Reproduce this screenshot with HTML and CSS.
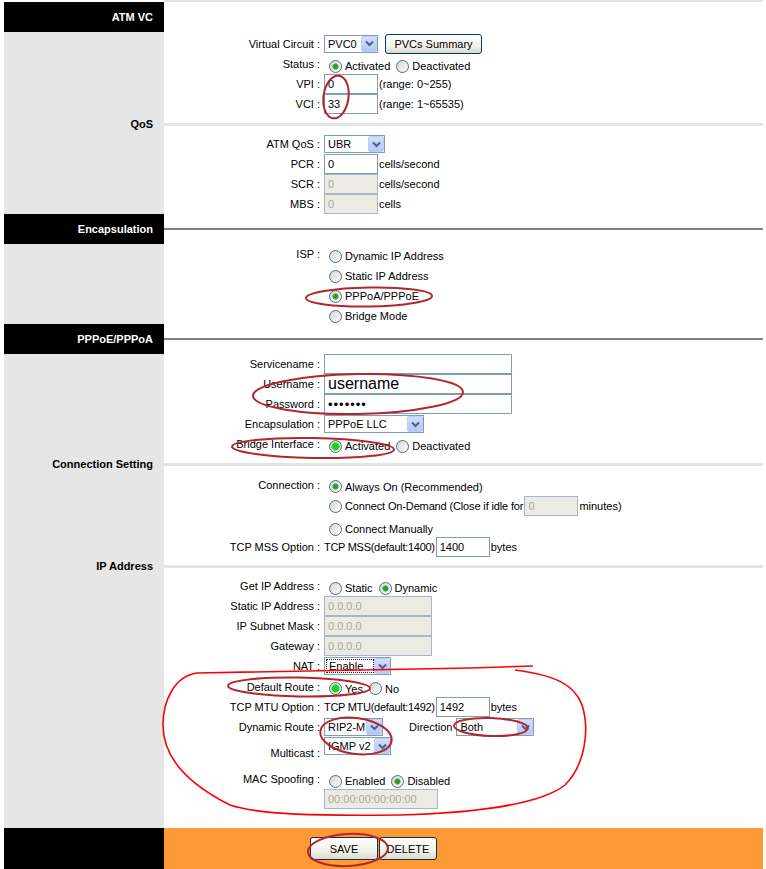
FILE: index.html
```html
<!DOCTYPE html>
<html lang="en">
<head>
    <meta charset="UTF-8">
    <title>WAN Setting</title>
    <link rel="stylesheet" href="styles.css">
</head>
<body>
<div class="page">
    <div class="config">
        <!-- ATM VC -->
        <div class="title dark first">ATM VC</div>
        <div class="rule top"></div>
        <div class="side"></div>
        <div class="fields">
            <div class="row h21 first-row">
                <span class="lbl">Virtual Circuit :</span>
                <div class="val">
                    <div class="select w54"><span class="cur">PVC0</span><span class="arrow"><svg viewBox="0 0 9 7"><polyline points="1,1.5 4.5,5 8,1.5"/></svg></span></div>
                    <button class="btn summary">PVCs Summary</button>
                </div>
            </div>
            <div class="row">
                <span class="lbl">Status :</span>
                <div class="val radios">
                    <label class="choice"><input type="radio" name="status" checked>Activated</label>
                    <label class="choice"><input type="radio" name="status">Deactivated</label>
                </div>
            </div>
            <div class="row">
                <span class="lbl">VPI :</span>
                <div class="val"><input class="txt w54" type="text" value="0"><span class="unit">(range: 0~255)</span></div>
            </div>
            <div class="row">
                <span class="lbl">VCI :</span>
                <div class="val"><input class="txt w54" type="text" value="33"><span class="unit">(range: 1~65535)</span></div>
            </div>
        </div>

        <!-- QoS -->
        <div class="title light">QoS</div>
        <div class="rule light"></div>
        <div class="side"></div>
        <div class="fields">
            <div class="row">
                <span class="lbl">ATM QoS :</span>
                <div class="val"><div class="select w61"><span class="cur">UBR</span><span class="arrow"><svg viewBox="0 0 9 7"><polyline points="1,1.5 4.5,5 8,1.5"/></svg></span></div></div>
            </div>
            <div class="row">
                <span class="lbl">PCR :</span>
                <div class="val"><input class="txt w54" type="text" value="0"><span class="unit">cells/second</span></div>
            </div>
            <div class="row">
                <span class="lbl">SCR :</span>
                <div class="val"><input class="txt w54" type="text" value="0" disabled><span class="unit">cells/second</span></div>
            </div>
            <div class="row">
                <span class="lbl">MBS :</span>
                <div class="val"><input class="txt w54" type="text" value="0" disabled><span class="unit">cells</span></div>
            </div>
        </div>

        <!-- Encapsulation -->
        <div class="title dark">Encapsulation</div>
        <div class="rule dark"></div>
        <div class="side"></div>
        <div class="fields">
            <div class="row">
                <span class="lbl">ISP :</span>
                <div class="val radios"><label class="choice"><input type="radio" name="isp">Dynamic IP Address</label></div>
            </div>
            <div class="row">
                <span class="lbl"></span>
                <div class="val radios"><label class="choice"><input type="radio" name="isp">Static IP Address</label></div>
            </div>
            <div class="row">
                <span class="lbl"></span>
                <div class="val radios"><label class="choice"><input type="radio" name="isp" checked>PPPoA/PPPoE</label></div>
            </div>
            <div class="row">
                <span class="lbl"></span>
                <div class="val radios"><label class="choice"><input type="radio" name="isp">Bridge Mode</label></div>
            </div>
        </div>

        <!-- PPPoE/PPPoA -->
        <div class="title dark">PPPoE/PPPoA</div>
        <div class="rule dark"></div>
        <div class="side"></div>
        <div class="fields">
            <div class="row">
                <span class="lbl">Servicename :</span>
                <div class="val"><input class="txt w188" type="text" value=""></div>
            </div>
            <div class="row">
                <span class="lbl">Username :</span>
                <div class="val"><input class="txt w188 big" type="text" value="username"></div>
            </div>
            <div class="row">
                <span class="lbl">Password :</span>
                <div class="val"><input class="txt w188 dots" type="password" value="1234567"></div>
            </div>
            <div class="row">
                <span class="lbl">Encapsulation :</span>
                <div class="val"><div class="select w100"><span class="cur">PPPoE LLC</span><span class="arrow"><svg viewBox="0 0 9 7"><polyline points="1,1.5 4.5,5 8,1.5"/></svg></span></div></div>
            </div>
            <div class="row">
                <span class="lbl">Bridge Interface :</span>
                <div class="val radios">
                    <label class="choice"><input class="hot" type="radio" name="bridge" checked>Activated</label>
                    <label class="choice"><input type="radio" name="bridge">Deactivated</label>
                </div>
            </div>
        </div>

        <!-- Connection Setting -->
        <div class="title light">Connection Setting</div>
        <div class="rule light"></div>
        <div class="side"></div>
        <div class="fields">
            <div class="row h21">
                <span class="lbl">Connection :</span>
                <div class="val radios"><label class="choice"><input type="radio" name="conn" checked>Always On (Recommended)</label></div>
            </div>
            <div class="row h22">
                <span class="lbl"></span>
                <div class="val">
                    <label class="choice tight-s"><input type="radio" name="conn">Connect On-Demand (Close if idle for</label>
                    <input class="txt w54 idle" type="text" value="0" disabled><span class="unit">minutes)</span>
                </div>
            </div>
            <div class="row">
                <span class="lbl"></span>
                <div class="val radios"><label class="choice"><input type="radio" name="conn">Connect Manually</label></div>
            </div>
            <div class="row h19">
                <span class="lbl">TCP MSS Option :</span>
                <div class="val"><span class="tight">TCP MSS(default:1400)</span><input class="txt w54 after" type="text" value="1400"><span class="unit">bytes</span></div>
            </div>
        </div>

        <!-- IP Address -->
        <div class="title light">IP Address</div>
        <div class="rule light"></div>
        <div class="side"></div>
        <div class="fields last">
            <div class="row">
                <span class="lbl">Get IP Address :</span>
                <div class="val radios">
                    <label class="choice"><input type="radio" name="getip">Static</label>
                    <label class="choice"><input type="radio" name="getip" checked>Dynamic</label>
                </div>
            </div>
            <div class="row">
                <span class="lbl">Static IP Address :</span>
                <div class="val"><input class="txt w108" type="text" value="0.0.0.0" disabled></div>
            </div>
            <div class="row">
                <span class="lbl">IP Subnet Mask :</span>
                <div class="val"><input class="txt w108" type="text" value="0.0.0.0" disabled></div>
            </div>
            <div class="row">
                <span class="lbl">Gateway :</span>
                <div class="val"><input class="txt w108" type="text" value="0.0.0.0" disabled></div>
            </div>
            <div class="row">
                <span class="lbl">NAT :</span>
                <div class="val"><div class="select w67"><span class="cur focus">Enable</span><span class="arrow"><svg viewBox="0 0 9 7"><polyline points="1,1.5 4.5,5 8,1.5"/></svg></span></div></div>
            </div>
            <div class="row h21">
                <span class="lbl">Default Route :</span>
                <div class="val radios">
                    <label class="choice"><input class="hot" type="radio" name="route" checked>Yes</label>
                    <label class="choice"><input type="radio" name="route">No</label>
                </div>
            </div>
            <div class="row">
                <span class="lbl">TCP MTU Option :</span>
                <div class="val"><span class="tight">TCP MTU(default:1492)</span><input class="txt w54 after" type="text" value="1492"><span class="unit">bytes</span></div>
            </div>
            <div class="row">
                <span class="lbl">Dynamic Route :</span>
                <div class="val">
                    <div class="select w59"><span class="cur">RIP2-M</span><span class="arrow"><svg viewBox="0 0 9 7"><polyline points="1,1.5 4.5,5 8,1.5"/></svg></span></div>
                    <span class="dir">Direction</span>
                    <div class="select w78"><span class="cur">Both</span><span class="arrow"><svg viewBox="0 0 9 7"><polyline points="1,1.5 4.5,5 8,1.5"/></svg></span></div>
                </div>
            </div>
            <div class="row h32 top">
                <span class="lbl">Multicast :</span>
                <div class="val"><div class="select w67"><span class="cur">IGMP v2</span><span class="arrow"><svg viewBox="0 0 9 7"><polyline points="1,1.5 4.5,5 8,1.5"/></svg></span></div></div>
            </div>
            <div class="row">
                <span class="lbl">MAC Spoofing :</span>
                <div class="val radios">
                    <label class="choice"><input type="radio" name="mac">Enabled</label>
                    <label class="choice"><input type="radio" name="mac" checked>Disabled</label>
                </div>
            </div>
            <div class="row">
                <span class="lbl"></span>
                <div class="val"><input class="txt w114" type="text" value="00:00:00:00:00:00" disabled></div>
            </div>
        </div>

        <!-- buttons -->
        <div class="title dark foot"></div>
        <div class="actions">
            <button class="btn save">SAVE</button>
            <button class="btn delete">DELETE</button>
        </div>
    </div>

    <!-- red pen marks over the screenshot -->
    <svg class="ink" width="766" height="869" viewBox="0 0 766 869">
        <g class="pen">
            <ellipse cx="336" cy="97" rx="12.5" ry="21.5" transform="rotate(8 336 97)"/>
            <ellipse cx="369" cy="297" rx="63" ry="9.5" transform="rotate(-1 369 297)"/>
            <ellipse cx="358" cy="394" rx="105" ry="20" transform="rotate(-1 358 394)"/>
            <ellipse cx="313" cy="448" rx="81" ry="10" transform="rotate(1 313 448)"/>
            <ellipse cx="299" cy="687" rx="71" ry="9.5" transform="rotate(1 299 687)"/>
            <ellipse cx="356" cy="736" rx="36" ry="18" transform="rotate(8 356 736)"/>
            <ellipse cx="491" cy="727" rx="37" ry="9" transform="rotate(2 491 727)"/>
            <ellipse cx="348" cy="850" rx="40" ry="16" transform="rotate(-3 348 850)"/>
        </g>
        <path class="loop" d="M533 666 L470 668 L197 673 C175 676 163 700 163 725 C163 760 190 785 230 805 C260 815 320 816 400 815 C470 813 540 805 565 785 C585 765 590 730 582 705 C575 685 555 675 515 670"/>
    </svg>
</div>
</body>
</html>
```

FILE: styles.css
```css
:root {
    --side: #e6e6e6;
    --rule-light: #e3e3e3;
    --rule-dark: #808080;
    --field-border: #7f9db9;
    --disabled-bg: #ebebe4;
    --disabled-text: #aca899;
    --orange: #fd9a35;
}

* {
    box-sizing: border-box;
}

body {
    margin: 0;
    background: #fff;
    color: #000;
    font-family: "Liberation Sans", Arial, sans-serif;
    font-size: 11px;
}

.page {
    position: relative;
    width: 766px;
    height: 869px;
    overflow: hidden;
}

.config {
    display: grid;
    grid-template-columns: 160px 599px;
    margin-left: 4px;
}

/* left column titles */
.title {
    background: var(--side);
    font-weight: bold;
    text-align: right;
    padding-right: 11px;
    white-space: nowrap;
}

.title.dark {
    background: #000;
    color: #fff;
    height: 30px;
    line-height: 30px;
}

.title.light {
    height: 20px;
    line-height: 20px;
}

.title.first {
    margin-top: 2px;
}

.title.foot {
    height: 41px;
}

.rule {
    display: flex;
    align-items: center;
}

.rule::before {
    content: "";
    flex: 1;
}

.rule.light::before {
    height: 3px;
    background: var(--rule-light);
}

.rule.dark::before {
    height: 2px;
    background: var(--rule-dark);
}

.rule.top {
    border-top: 2px solid var(--rule-light);
}

.side {
    background: var(--side);
}

.fields.last {
    padding-bottom: 19px;
}

/* form rows */
.row {
    display: grid;
    grid-template-columns: 160px 1fr;
    align-items: center;
    height: 20px;
}

.row.first-row {
    margin-top: 1px;
}

.row.h19 { height: 19px; }
.row.h21 { height: 21px; }
.row.h22 { height: 22px; }
.row.h32 { height: 32px; }

.row.top .val {
    align-self: start;
}

.lbl {
    text-align: right;
    padding-right: 4px;
    white-space: nowrap;
}

.val {
    display: flex;
    align-items: center;
    white-space: nowrap;
}

.val.radios {
    padding-top: 4px;
}

.unit {
    margin-left: 1px;
}

.tight {
    letter-spacing: -0.28px;
}

.tight-s {
    letter-spacing: -0.14px;
}

.choice {
    display: inline-flex;
    align-items: center;
}

.choice input[type="radio"] {
    appearance: none;
    -webkit-appearance: none;
    width: 13px;
    height: 13px;
    margin: 0 3px 0 5px;
    border: 1px solid #4f6d8f;
    border-radius: 50%;
    background: linear-gradient(135deg, #d4d4ce, #fff);
}

.choice + .choice input[type="radio"] {
    margin-left: 6px;
}

.choice input[type="radio"]:checked {
    background:
        radial-gradient(circle, #2a9c2a 0, #2a9c2a 2px, #86c986 3px, transparent 3.5px),
        linear-gradient(135deg, #d4d4ce, #fff);
}

.choice input[type="radio"].hot:checked {
    background:
        radial-gradient(circle, #19d419 0, #19d419 3px, #74e474 4px, transparent 4.5px),
        linear-gradient(135deg, #d4d4ce, #fff);
}

/* text fields */
.txt {
    height: 20px;
    margin: 0;
    padding: 0 3px;
    border: 1px solid var(--field-border);
    background: #fff;
    color: #000;
    font-family: inherit;
    font-size: 11px;
    outline: none;
}

.txt:disabled {
    background: var(--disabled-bg);
    color: var(--disabled-text);
    border-color: #a8b6c6;
}

.txt.big {
    font-size: 16px;
}

.txt.dots {
    font-size: 13px;
    letter-spacing: 1px;
}

.txt.after {
    margin-left: 1px;
}

.txt.idle {
    margin-left: 1px;
}

.w54 { width: 54px; }
.w108 { width: 108px; }
.w114 { width: 114px; }
.w188 { width: 188px; }

/* drop-down lists */
.select {
    display: inline-flex;
    align-items: stretch;
    height: 18px;
    border: 1px solid var(--field-border);
    background: #fff;
}

.select .cur {
    flex: 1;
    display: flex;
    align-items: center;
    padding-left: 3px;
}

.select .cur.focus {
    margin: 1px 0 1px 1px;
    padding-left: 2px;
    border: 1px dotted #222;
}

.select .arrow {
    width: 16px;
    display: flex;
    align-items: center;
    justify-content: center;
    background: linear-gradient(#d2defd, #b4c6f6);
    border: 1px solid #bfcff4;
    border-radius: 2px;
}

.select .arrow svg {
    width: 9px;
    height: 7px;
    fill: none;
    stroke: #4d6185;
    stroke-width: 2;
}

.w59 { width: 59px; }
.w61 { width: 61px; }
.w67 { width: 67px; }
.w78 { width: 78px; }
.w100 { width: 100px; }

.dir {
    margin: 0 4px 0 26px;
}

/* buttons */
.btn {
    margin: 0;
    padding: 0;
    border: 1px solid #1f2f48;
    border-radius: 3px;
    background: linear-gradient(#fff, #f3f2ec 60%, #dcd8cb);
    color: #000;
    font-family: inherit;
    font-size: 11px;
}

.btn.summary {
    width: 97px;
    height: 20px;
    margin-left: 7px;
    border-color: #003c74;
}

.actions {
    display: flex;
    align-items: center;
    gap: 1px;
    height: 41px;
    padding-left: 146px;
    background: var(--orange);
}

.btn.save {
    width: 68px;
    height: 23px;
}

.btn.delete {
    width: 58px;
    height: 23px;
}

/* pen marks */
.ink {
    position: absolute;
    top: 0;
    left: 0;
    pointer-events: none;
}

.ink .pen ellipse {
    fill: none;
    stroke: #b3262b;
    stroke-width: 2;
}

.ink .loop {
    fill: none;
    stroke: #f00;
    stroke-width: 1.6;
    stroke-linejoin: round;
}
```
